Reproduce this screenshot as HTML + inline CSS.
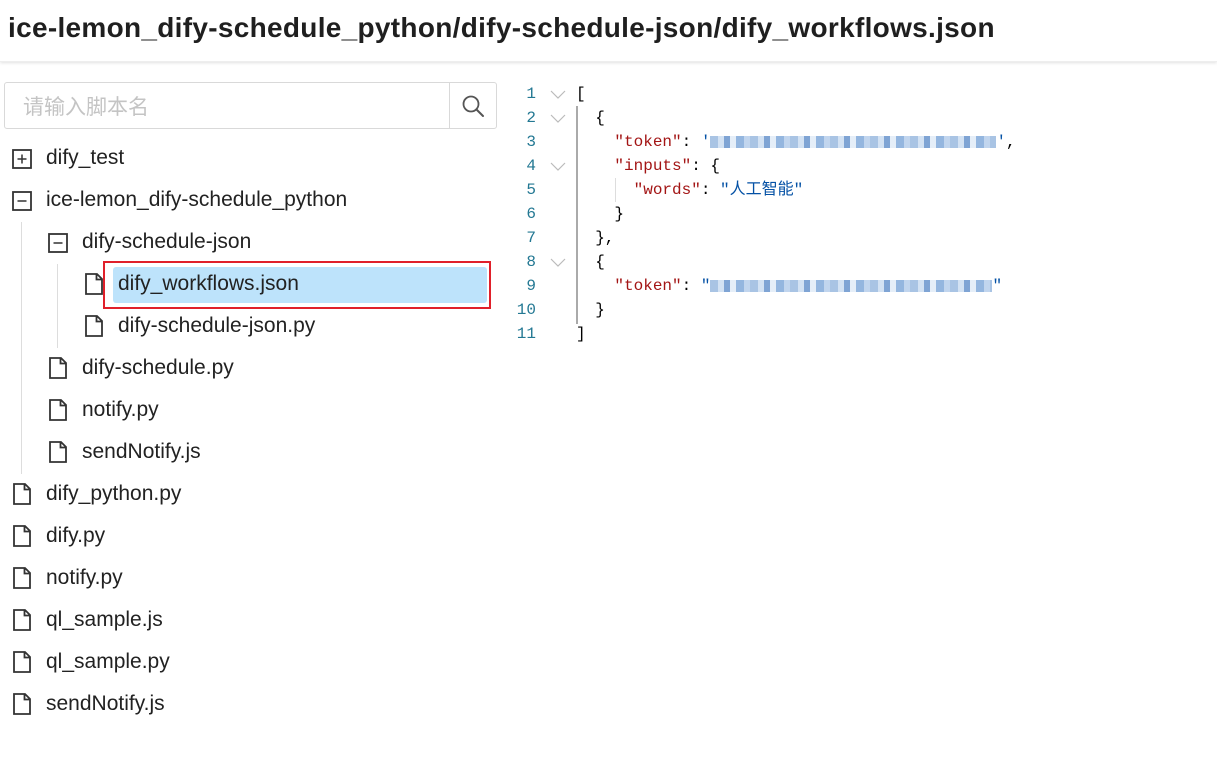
<!DOCTYPE html>
<html><head><meta charset="utf-8"><style>
*{margin:0;padding:0;box-sizing:border-box}
body{width:1217px;height:759px;background:#fff;font-family:"Liberation Sans","Noto Sans CJK SC",sans-serif;color:#222;position:relative;overflow:hidden}
.hdr{position:absolute;left:0;top:0;width:1217px;height:62px;box-shadow:0 1px 3px rgba(0,0,0,.12);border-bottom:1px solid #eee}
.hdr h1{position:absolute;left:8px;top:12px;font-size:28px;font-weight:bold;letter-spacing:0.3px;color:#1f1f1f;white-space:nowrap}
.search{position:absolute;left:4px;top:82px;width:493px;height:47px;border:1px solid #d9d9d9;border-radius:3px}
.search .ph{position:absolute;left:18px;top:8px;font-size:21px;color:#c4c4c4}
.search .btn{position:absolute;right:0;top:0;width:47px;height:45px;border-left:1px solid #d9d9d9}
.row{position:absolute;height:42px;line-height:42px;font-size:21px;color:#222;white-space:nowrap}
.vl{position:absolute;width:1px;background:#ddd}
.sel{position:absolute;left:103px;top:261px;width:388px;height:48px;border:2px solid #e0202a}
.sel div{position:absolute;left:8px;top:4px;width:374px;height:36px;background:#bde3fb;border-radius:3px}
.code{position:absolute;left:510px;top:84px;font-family:"Liberation Mono",monospace;font-size:16px}
.ln{position:absolute;width:26px;text-align:right;color:#237893;left:0;line-height:20px}
.cl{position:absolute;left:66px;white-space:pre;color:#000;line-height:20px;height:20px}
.k{color:#a31515}.s{color:#0451a5}
.chev{position:absolute;left:40px}
.blur{display:inline-block;height:12px;vertical-align:middle;background:repeating-linear-gradient(90deg,#a9c4e4 0 8px,#d3e2f3 8px 14px,#7fa4d4 14px 20px,#e5eef8 20px 26px,#94b6df 26px 34px,#c1d5ee 34px 40px)}
</style></head><body>
<div class="hdr"><h1>ice-lemon_dify-schedule_python/dify-schedule-json/dify_workflows.json</h1></div>
<div class="search"><span class="ph">请输入脚本名</span><div class="btn"><svg width="47" height="45" viewBox="0 0 47 45"><circle cx="21" cy="21" r="7.5" fill="none" stroke="#555" stroke-width="1.8"/><path d="M26.5 26.5L33 33" stroke="#555" stroke-width="2" stroke-linecap="round"/></svg></div></div>

<div class="vl" style="left:21px;top:222px;height:252px"></div>
<div class="vl" style="left:57px;top:264px;height:84px"></div>

<svg style="position:absolute;left:12px;top:149px" width="20" height="20"><rect x="1" y="1" width="18" height="18" fill="none" stroke="#333" stroke-width="1.8"/><path d="M5.5 10h9M10 5.5v9" stroke="#333" stroke-width="1.5"/></svg>
<div class="row" style="left:46px;top:137px">dify_test</div>
<svg style="position:absolute;left:12px;top:191px" width="20" height="20"><rect x="1" y="1" width="18" height="18" fill="none" stroke="#333" stroke-width="1.8"/><path d="M5.5 10h9" stroke="#333" stroke-width="1.5"/></svg>
<div class="row" style="left:46px;top:179px">ice-lemon_dify-schedule_python</div>
<svg style="position:absolute;left:48px;top:233px" width="20" height="20"><rect x="1" y="1" width="18" height="18" fill="none" stroke="#333" stroke-width="1.8"/><path d="M5.5 10h9" stroke="#333" stroke-width="1.5"/></svg>
<div class="row" style="left:82px;top:221px">dify-schedule-json</div>

<div class="sel"><div></div></div>

<svg width="0" height="0" style="position:absolute"><defs><symbol id="f" viewBox="0 0 18 22"><path d="M1 1h11l5 5v15h-16z M11.5 1v5.5h5.5" fill="none" stroke="#333" stroke-width="1.8"/></symbol></defs></svg>

<svg style="position:absolute;left:85px;top:273px" width="18" height="22"><use href="#f"/></svg>
<div class="row" style="left:118px;top:263px">dify_workflows.json</div>
<svg style="position:absolute;left:85px;top:315px" width="18" height="22"><use href="#f"/></svg>
<div class="row" style="left:118px;top:305px">dify-schedule-json.py</div>
<svg style="position:absolute;left:49px;top:357px" width="18" height="22"><use href="#f"/></svg>
<div class="row" style="left:82px;top:347px">dify-schedule.py</div>
<svg style="position:absolute;left:49px;top:399px" width="18" height="22"><use href="#f"/></svg>
<div class="row" style="left:82px;top:389px">notify.py</div>
<svg style="position:absolute;left:49px;top:441px" width="18" height="22"><use href="#f"/></svg>
<div class="row" style="left:82px;top:431px">sendNotify.js</div>
<svg style="position:absolute;left:13px;top:483px" width="18" height="22"><use href="#f"/></svg>
<div class="row" style="left:46px;top:473px">dify_python.py</div>
<svg style="position:absolute;left:13px;top:525px" width="18" height="22"><use href="#f"/></svg>
<div class="row" style="left:46px;top:515px">dify.py</div>
<svg style="position:absolute;left:13px;top:567px" width="18" height="22"><use href="#f"/></svg>
<div class="row" style="left:46px;top:557px">notify.py</div>
<svg style="position:absolute;left:13px;top:609px" width="18" height="22"><use href="#f"/></svg>
<div class="row" style="left:46px;top:599px">ql_sample.js</div>
<svg style="position:absolute;left:13px;top:651px" width="18" height="22"><use href="#f"/></svg>
<div class="row" style="left:46px;top:641px">ql_sample.py</div>
<svg style="position:absolute;left:13px;top:693px" width="18" height="22"><use href="#f"/></svg>
<div class="row" style="left:46px;top:683px">sendNotify.js</div>

<div class="code">
<div style="position:absolute;left:66px;top:22px;width:2px;height:218px;background:#aaa"></div>
<div style="position:absolute;left:105px;top:94px;width:1px;height:24px;background:#ddd"></div>
<div class="ln" style="top:0px">1</div><div class="ln" style="top:24px">2</div><div class="ln" style="top:48px">3</div><div class="ln" style="top:72px">4</div><div class="ln" style="top:96px">5</div><div class="ln" style="top:120px">6</div><div class="ln" style="top:144px">7</div><div class="ln" style="top:168px">8</div><div class="ln" style="top:192px">9</div><div class="ln" style="top:216px">10</div><div class="ln" style="top:240px">11</div>
<svg class="chev" style="top:6px" width="16" height="10"><path d="M1 1l7 7 7-7" fill="none" stroke="#bbb" stroke-width="1.2"/></svg>
<svg class="chev" style="top:30px" width="16" height="10"><path d="M1 1l7 7 7-7" fill="none" stroke="#bbb" stroke-width="1.2"/></svg>
<svg class="chev" style="top:78px" width="16" height="10"><path d="M1 1l7 7 7-7" fill="none" stroke="#bbb" stroke-width="1.2"/></svg>
<svg class="chev" style="top:174px" width="16" height="10"><path d="M1 1l7 7 7-7" fill="none" stroke="#bbb" stroke-width="1.2"/></svg>
<div class="cl" style="top:0px">[</div>
<div class="cl" style="top:24px">  {</div>
<div class="cl" style="top:48px">    <span class="k">"token"</span>: <span class="s">'</span><span class="blur" style="width:286px"></span><span class="s">'</span>,</div>
<div class="cl" style="top:72px">    <span class="k">"inputs"</span>: {</div>
<div class="cl" style="top:96px">      <span class="k">"words"</span>: <span class="s">"人工智能"</span></div>
<div class="cl" style="top:120px">    }</div>
<div class="cl" style="top:144px">  },</div>
<div class="cl" style="top:168px">  {</div>
<div class="cl" style="top:192px">    <span class="k">"token"</span>: <span class="s">"</span><span class="blur" style="width:282px"></span><span class="s">"</span></div>
<div class="cl" style="top:216px">  }</div>
<div class="cl" style="top:240px">]</div>
</div>
</body></html>
